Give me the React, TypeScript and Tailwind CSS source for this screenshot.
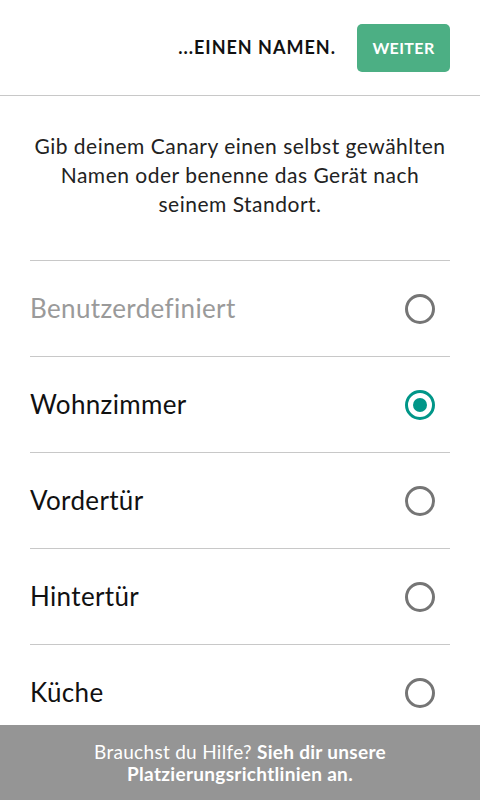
import React, { useState } from 'react';

const options = ['Benutzerdefiniert', 'Wohnzimmer', 'Vordertür', 'Hintertür', 'Küche'];

const App: React.FC = () => {
    const [selected, setSelected] = useState('Wohnzimmer');

    return (
        <div className="h-[800px] w-full flex flex-col bg-white overflow-hidden font-['Lato',sans-serif]">
            {/* Header */}
            <div className="h-[96px] shrink-0 flex items-center justify-end gap-[21px] pr-[30px] border-b border-[#c8c8c8]">
                <span className="text-[18px] font-bold tracking-[1px] text-[#111]">...EINEN NAMEN.</span>
                <button className="w-[93px] h-[48px] rounded-[5px] bg-[#4caf84] text-white text-[16px] font-bold tracking-[0.4px]">
                    WEITER
                </button>
            </div>

            {/* Body */}
            <div className="flex-1 overflow-hidden px-[30px]">
                <p className="pt-[35px] pb-[42px] text-center text-[21px] leading-[29px] tracking-[0.5px] text-[#222]">
                    Gib deinem Canary einen selbst gewählten Namen oder benenne das Gerät nach seinem Standort.
                </p>
                <div className="border-t border-[#c8c8c8]">
                    {options.map((opt, i) => {
                        const active = selected === opt;
                        return (
                            <div
                                key={opt}
                                onClick={() => setSelected(opt)}
                                className="h-[96px] flex items-center justify-between border-b border-[#c8c8c8]"
                            >
                                <span className={`text-[26px] tracking-[0.35px] ${i === 0 ? 'text-[#9a9a9a]' : 'text-[#111]'}`}>{opt}</span>
                                <span
                                    className={`mr-[15px] w-[30px] h-[30px] rounded-full border-[3px] flex items-center justify-center ${
                                        active ? 'border-[#009688]' : 'border-[#757575]'
                                    }`}
                                >
                                    {active && <span className="w-[14px] h-[14px] rounded-full bg-[#009688]" />}
                                </span>
                            </div>
                        );
                    })}
                </div>
            </div>

            {/* Footer */}
            <div className="h-[75px] shrink-0 bg-[#959595] flex items-center justify-center px-[40px]">
                <p className="text-center text-[19px] leading-[22px] tracking-[0.3px] text-white">
                    Brauchst du Hilfe? <span className="font-bold">Sieh dir unsere Platzierungsrichtlinien an.</span>
                </p>
            </div>
        </div>
    );
};

export default App;
